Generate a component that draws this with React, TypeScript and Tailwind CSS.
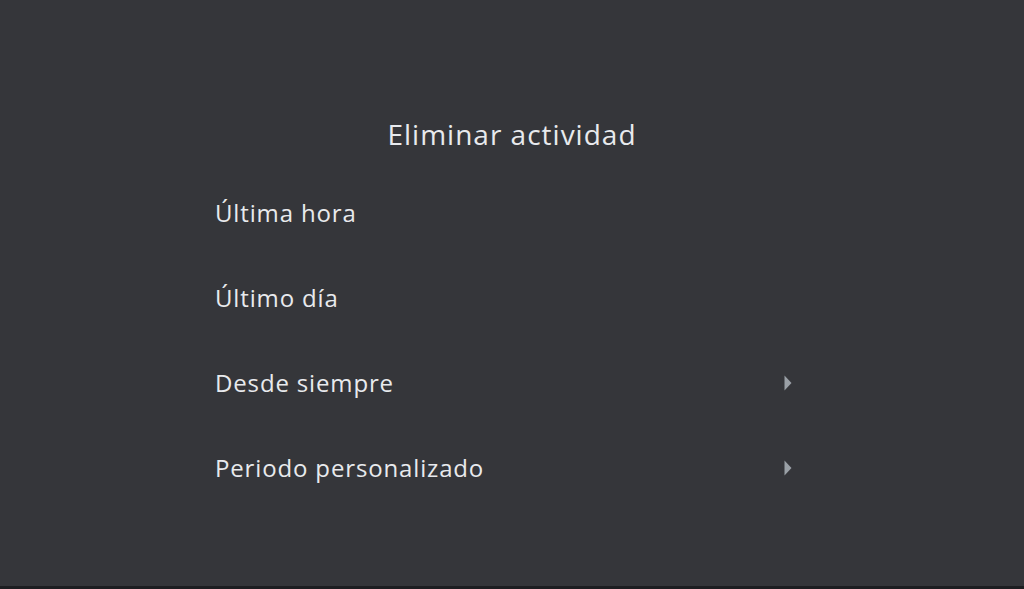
import React from "react";

function Arrow() {
  return (
    <svg width="10" height="16" viewBox="0 0 10 16" className="block">
      <path d="M1.5 0.5 L8.5 8 L1.5 15.5 Z" fill="#9aa0a6" />
    </svg>
  );
}

const items: { label: string; arrow: boolean }[] = [
  { label: "Última hora", arrow: false },
  { label: "Último día", arrow: false },
  { label: "Desde siempre", arrow: true },
  { label: "Periodo personalizado", arrow: true },
];

export default function App() {
  return (
    <div
      className="w-[1024px] h-[589px] bg-[#35363a] flex flex-col overflow-hidden"
      style={{ fontFamily: "'Open Sans', Roboto, sans-serif" }}
    >
      <div className="flex-1 flex flex-col pt-[115px]">
        <h1 className="text-center text-[28px] leading-[38px] text-[#e8eaed] font-normal tracking-[1px]">
          Eliminar actividad
        </h1>
        <ul className="pl-[215px] pr-[231px] mt-[17px]">
          {items.map((it) => (
            <li
              key={it.label}
              className="h-[85px] flex items-center justify-between"
            >
              <span className="text-[24px] leading-[30px] text-[#e8eaed] font-medium tracking-[0.85px]">
                {it.label}
              </span>
              {it.arrow && (
                <span>
                  <Arrow />
                </span>
              )}
            </li>
          ))}
        </ul>
      </div>
      <div className="h-[3px] bg-[#1d1e21] shrink-0" />
    </div>
  );
}
